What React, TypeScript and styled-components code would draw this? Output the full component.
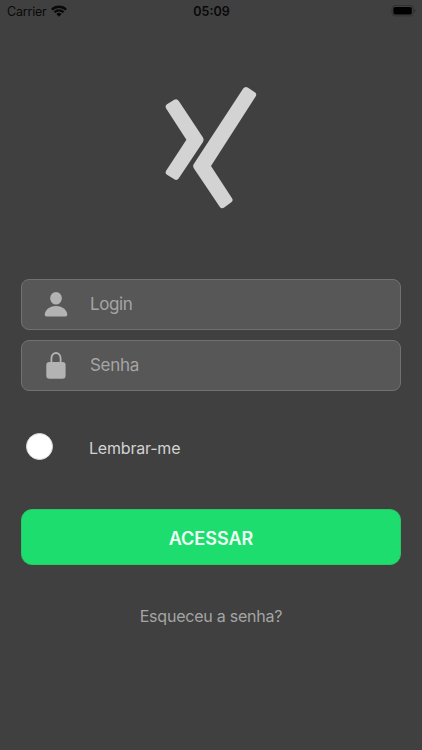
import React from "react";
import styled, { createGlobalStyle } from "styled-components";

const GlobalStyle = createGlobalStyle`
  * { box-sizing: border-box; }
  body { margin: 0; background: #404040; font-family: Inter, "Liberation Sans", sans-serif; }
  button, input { font-family: inherit; }
`;

const Screen = styled.main`
  width: 100%;
  height: 750px;
  overflow: hidden;
  display: flex;
  flex-direction: column;
  background: #404040;
`;

const StatusBar = styled.header`
  height: 22px;
  flex: none;
  padding: 0 6px 0 7px;
  display: grid;
  grid-template-columns: 1fr auto 1fr;
  align-items: center;
  color: #090909;
  font-size: 12.5px;
  line-height: 22px;
`;

const Carrier = styled.div`
  display: flex;
  align-items: center;
  gap: 4px;
  letter-spacing: -0.2px;
`;

const SignalIcon = styled.svg`
  margin-bottom: 2px;
`;

const Clock = styled.time`
  font-weight: 600;
  font-size: 12.5px;
  padding-top: 1px;
  letter-spacing: 0;
`;

const Battery = styled.svg`
  justify-self: end;
  display: block;
  margin-bottom: 1px;
`;

const Logo = styled.svg`
  display: block;
  flex: none;
  width: 92px;
  height: 124px;
  margin: 64px auto 69px;
`;

const Form = styled.form`
  display: flex;
  flex-direction: column;
  padding: 0 21px;
`;

const Fields = styled.div`
  display: flex;
  flex-direction: column;
  gap: 10px;
`;

const Field = styled.label`
  display: flex;
  align-items: center;
  height: 51px;
  border: 1px solid #717171;
  border-radius: 8px;
  background: #575757;
`;

const FieldIcon = styled.svg`
  flex: none;
  width: 68px;
  height: 49px;
  fill: #b3b3b3;
`;

const Input = styled.input<{ $spacing: number }>`
  flex: 1;
  min-width: 0;
  height: 49px;
  padding: 0 0 2px;
  border: 0;
  outline: 0;
  background: transparent;
  color: #dddddd;
  font-size: 17px;
  letter-spacing: ${({ $spacing }) => $spacing}px;
  &::placeholder { color: #a5a5a5; opacity: 1; }
`;

const Remember = styled.label`
  display: flex;
  align-items: center;
  height: 27px;
  margin: 42px 0 0 4.5px;
  color: #d3d3d3;
  font-size: 16px;
`;

const RememberText = styled.span`
  margin: 2px 0 0 36.5px;
  letter-spacing: -0.2px;
`;

const Knob = styled.span`
  width: 27px;
  height: 27px;
  border-radius: 50%;
  background: #ffffff;
  border: 1px solid #d9d9d9;
`;

const Submit = styled.button`
  height: 56px;
  margin-top: 49px;
  padding: 2px 0 0;
  border: 1px solid #29c966;
  border-radius: 11px;
  background: #1edd6f;
  color: #f0fff5;
  font-size: 18px;
  font-weight: 600;
`;

const Forgot = styled.a`
  align-self: center;
  margin-top: 39px;
  color: #a5a5a5;
  font-size: 16px;
  line-height: 25px;
  letter-spacing: -0.23px;
`;

export default function App() {
  return (
    <Screen>
      <GlobalStyle />
      <StatusBar>
        <Carrier>
          <span>Carrier</span>
          <SignalIcon width="16" height="12" viewBox="0 0 16 12" fill="none" stroke="currentColor">
            <path d="M.9 4.7a10 10 0 0 1 14.2 0M3.4 7.2a6.5 6.5 0 0 1 9.2 0" strokeWidth="2.3" />
            <path d="M5.3 9.1a3.8 3.8 0 0 1 5.4 0L8 11.8Z" fill="currentColor" stroke="none" />
          </SignalIcon>
        </Carrier>
        <Clock>05:09</Clock>
        <Battery width="25" height="12" viewBox="0 0 25 12">
          <rect x="1" y=".5" width="21.2" height="10.4" rx="3" fill="none" stroke="#303030" />
          <rect x="2.4" y="2" width="18.4" height="7.4" rx="1.7" fill="#000" />
          <path d="M23.4 3.9v3.6q1.2-.5 1.2-1.8t-1.2-1.8" fill="#2b2b2b" />
        </Battery>
      </StatusBar>
      <Logo viewBox="165 86 92 124" fill="#d3d3d3">
        <path d="M167 104.3L174.2 99.7Q177 98.2 178.8 101L202.8 137.3Q204.3 139.8 202.8 142.3L178.8 178.2Q177 181 174.3 179.3L167 174.7Q164.6 173.2 166.3 170.5L186.4 139.8L166.3 108.7Q164.6 106 167 104.3Z" />
        <path d="M243.2 88.6Q245 85.9 247.7 87.6L254.8 92.2Q257.3 93.9 255.6 96.6L211 166L232 198.2Q233.7 200.8 231 202.6L224.2 207.6Q221.5 209.4 219.7 206.7L193.8 168.2Q192.5 166 193.8 163.9Z" />
      </Logo>
      <Form onSubmit={(event) => event.preventDefault()}>
        <Fields>
          <Field>
            <FieldIcon viewBox="0 0 68 49">
              <ellipse cx="34" cy="18.2" rx="5.8" ry="6.3" />
              <path d="M22.7 34.8C22.7 30.6 27 25.9 34 25.9S45.3 30.6 45.3 34.8Q45.3 36.6 43.4 36.6H24.6Q22.7 36.6 22.7 34.8Z" />
            </FieldIcon>
            <Input $spacing={-0.38} placeholder="Login" aria-label="Login" />
          </Field>
          <Field>
            <FieldIcon viewBox="0 0 68 49">
              <path d="M29.4 24V17.7C29.4 10.1 38.6 10.1 38.6 17.7V24" fill="none" stroke="#b3b3b3" strokeWidth="1.8" />
              <rect x="24.3" y="21.1" width="19.3" height="16.6" rx="3.2" />
            </FieldIcon>
            <Input $spacing={-0.3} type="password" placeholder="Senha" aria-label="Senha" />
          </Field>
        </Fields>
        <Remember>
          <Knob />
          <RememberText>Lembrar-me</RememberText>
        </Remember>
        <Submit type="submit">ACESSAR</Submit>
        <Forgot>Esqueceu a senha?</Forgot>
      </Form>
    </Screen>
  );
}
